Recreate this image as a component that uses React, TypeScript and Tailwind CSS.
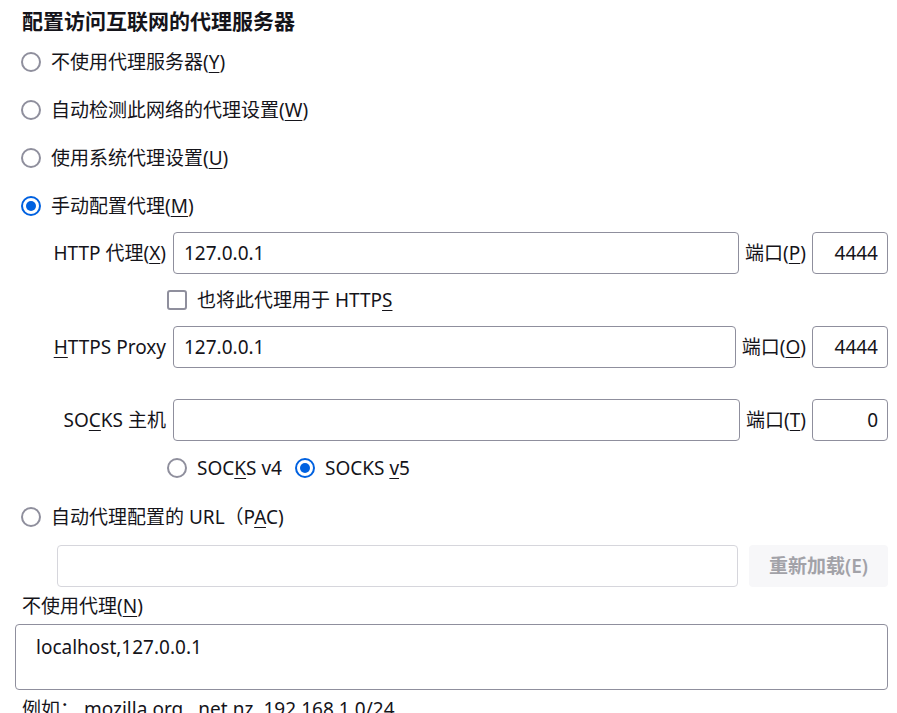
import React from "react";

const font = { fontFamily: '"Noto Sans", "Noto Sans CJK SC", sans-serif' };

function Radio({ checked }: { checked?: boolean }) {
  return checked ? (
    <span className="box-border flex h-[20px] w-[20px] shrink-0 items-center justify-center rounded-full border-2 border-[#0061e0] bg-white">
      <span className="h-[10px] w-[10px] rounded-full bg-[#0061e0]" />
    </span>
  ) : (
    <span className="box-border block h-[20px] w-[20px] shrink-0 rounded-full border-2 border-[#8f8f9d] bg-white" />
  );
}

function RadioRow({ checked, children }: { checked?: boolean; children: React.ReactNode }) {
  return (
    <div className="flex h-[48px] items-center gap-[10px] pl-[21px]">
      <Radio checked={checked} />
      <span>{children}</span>
    </div>
  );
}

function ProxyRow({
  label,
  value,
  portLabel,
  port,
  className,
}: {
  label: React.ReactNode;
  value: string;
  portLabel: React.ReactNode;
  port: string;
  className?: string;
}) {
  return (
    <div className={"flex h-[42px] items-center gap-[6px] " + (className ?? "")}>
      <div className="w-[145px] shrink-0 pr-[1px] text-right whitespace-nowrap">{label}</div>
      <div className="box-border flex h-[42px] min-w-0 flex-1 items-center rounded-[4px] border border-[#8f8f9d] pl-[10px]">
        {value}
      </div>
      <div className="whitespace-nowrap">{portLabel}</div>
      <div className="box-border flex h-[42px] w-[76px] shrink-0 items-center justify-end rounded-[4px] border border-[#8f8f9d] pr-[9px]">
        {port}
      </div>
    </div>
  );
}

const U = ({ children }: { children: React.ReactNode }) => (
  <span className="underline decoration-1 underline-offset-[3px]">{children}</span>
);

export default function App() {
  return (
    <div
      className="h-[713px] w-[897px] overflow-hidden bg-white pr-[9px] text-[19px] leading-[26px] text-[#15141a]"
      style={font}
    >
      <div className="pt-[8px] pl-[22px] text-[21px] font-bold leading-[26px]">
        配置访问互联网的代理服务器
      </div>
      <div className="mt-[4px]">
        <RadioRow>
          不使用代理服务器(<U>Y</U>)
        </RadioRow>
        <RadioRow>
          自动检测此网络的代理设置(<U>W</U>)
        </RadioRow>
        <RadioRow>
          使用系统代理设置(<U>U</U>)
        </RadioRow>
        <RadioRow checked>
          手动配置代理(<U>M</U>)
        </RadioRow>
      </div>

      <div className="pl-[22px]">
        <ProxyRow
          className="mt-[2px]"
          label={
            <>
              HTTP 代理(<U>X</U>)
            </>
          }
          value="127.0.0.1"
          portLabel={
            <>
              端口(<U>P</U>)
            </>
          }
          port="4444"
        />
        <div className="flex h-[52px] items-center gap-[10px] pl-[145px]">
          <span className="box-border block h-[20px] w-[20px] rounded-[3px] border-2 border-[#8f8f9d] bg-white" />
          <span>
            也将此代理用于 HTTP<U>S</U>
          </span>
        </div>
        <ProxyRow
          label={
            <>
              <U>H</U>TTPS Proxy
            </>
          }
          value="127.0.0.1"
          portLabel={
            <>
              端口(<U>O</U>)
            </>
          }
          port="4444"
        />
        <ProxyRow
          className="mt-[31px]"
          label={
            <>
              SO<U>C</U>KS 主机
            </>
          }
          value=""
          portLabel={
            <>
              端口(<U>T</U>)
            </>
          }
          port="0"
        />
        <div className="flex h-[54px] items-center pl-[145px]">
          <Radio />
          <span className="ml-[10px]">
            SOC<U>K</U>S v4
          </span>
          <span className="ml-[13px]">
            <Radio checked />
          </span>
          <span className="ml-[10px]">
            SOCKS <U>v</U>5
          </span>
        </div>
      </div>

      <div className="flex h-[44px] items-center gap-[10px] pl-[21px]">
        <Radio />
        <span>
          自动代理配置的 URL（P<U>A</U>C)
        </span>
      </div>
      <div className="mt-[6px] flex h-[42px] items-center gap-[11px] pl-[57px]">
        <div className="box-border h-[42px] flex-1 rounded-[4px] border border-[#d6d6dc] bg-white" />
        <div className="flex h-[42px] w-[139px] items-center justify-center rounded-[4px] bg-[#f7f7f9] font-semibold text-[#a2a2a8]">
          重新加载(E)
        </div>
      </div>

      <div className="flex h-[37px] items-center pl-[22px]">
        不使用代理(<U>N</U>)
      </div>
      <div className="ml-[15px] box-border h-[66px] rounded-[4px] border border-[#8f8f9d] pt-[9px] pl-[20px]">
        localhost,127.0.0.1
      </div>
      <div className="mt-[6px] pl-[22px] whitespace-nowrap">例如： mozilla.org, .net.nz, 192.168.1.0/24</div>
    </div>
  );
}
